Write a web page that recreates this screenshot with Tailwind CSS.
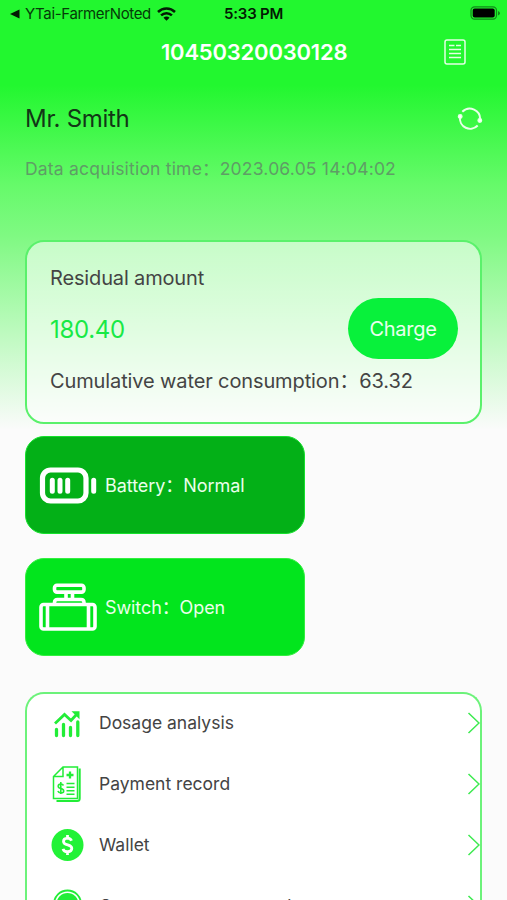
<!DOCTYPE html>
<html lang="en">
<head>
  <meta charset="UTF-8">
  <meta name="viewport" content="width=device-width, initial-scale=1.0">
  <title>Water Meter</title>
  <script src="https://cdn.jsdelivr.net/npm/@tailwindcss/browser@4"></script>
</head>
<body class="h-[900px] overflow-hidden bg-[#fbfbfb] bg-[linear-gradient(to_bottom,#22f72f_0px,#22f72f_85px,#67fa6b_187px,#80f983_237px,#fbfbfb_430px)] bg-no-repeat font-['Inter','Noto_Sans_CJK_SC',sans-serif] text-[#444]">
  <!-- status bar -->
  <div class="flex h-7 items-center justify-between pl-[9px] pr-1.5 text-[#053b08]">
    <div class="flex w-[215px] items-center">
      <svg class="h-3 w-[11px]" viewBox="0 0 11 12"><path d="M10.5 1.5v9L1 6z" fill="#031a04"/></svg>
      <span class="ml-[5px] text-[15px] tracking-[-0.35px]">YTai-FarmerNoted</span>
      <svg class="ml-1.5 h-[14px] w-[19px]" viewBox="0 0 19 14" fill="none" stroke="#031a04" stroke-width="2.5">
        <path d="M1 5a12.2 12.2 0 0 1 17 0"/>
        <path d="M4.1 8.4a7.7 7.7 0 0 1 10.8 0"/>
        <path d="M9.5 13.8l-3-3a4.2 4.2 0 0 1 6 0z" fill="#031a04" stroke="none"/>
      </svg>
    </div>
    <span class="text-[15px] font-semibold tracking-[-0.2px] text-[#031a04]">5:33 PM</span>
    <svg class="-mt-0.5 ml-auto h-[14px] w-[31px]" viewBox="0 0 31 14">
      <rect x="1" y="0.8" width="25.5" height="12.4" rx="3.6" fill="none" stroke="#118a1a" stroke-width="1.2"/>
      <rect x="2.7" y="2.4" width="22" height="9.2" rx="2" fill="#000"/>
      <path d="M28 5v4.6q2-.8 2-2.3t-2-2.3z" fill="#118a1a"/>
    </svg>
  </div>

  <!-- title bar -->
  <div class="flex h-12 items-center pl-[161px] pr-[41px] text-white">
    <h1 class="text-[22px] font-semibold tracking-[-0.2px]">10450320030128</h1>
    <svg class="ml-auto h-[26px] w-[22px]" viewBox="0 0 22 26" fill="none" stroke="#e4ffe5" stroke-width="1.5">
      <rect x="1" y="1" width="20" height="24" rx="2"/>
      <path d="M5 6.5h5.5M12 6.5h5M5 10.5h12M5 14.5h12M5 18.5h12"/>
    </svg>
  </div>

  <!-- user -->
  <div class="flex h-[85px] items-center pl-[25px] pr-[24px]">
    <h2 class="text-[24px] tracking-[-0.3px] text-[#123616]">Mr. Smith</h2>
    <svg class="ml-auto h-6 w-[26px]" viewBox="0 0 26 24" fill="none" stroke="#e9ffea" stroke-width="2">
      <path d="M5.3 4.8A10.3 10.3 0 0 1 23 13"/>
      <path d="M20.7 18.5A10.3 10.3 0 0 1 3 10"/>
      <circle cx="3.2" cy="9.5" r="1.8" fill="#fff" stroke-width="1.3"/>
      <circle cx="22.8" cy="13.5" r="1.8" fill="#fff" stroke-width="1.3"/>
    </svg>
  </div>
  <p class="-mt-0.5 flex h-[20px] items-center pl-[25px] text-[17.5px] tracking-[0.2px] whitespace-nowrap text-[#5f9d66]">Data acquisition time：2023.06.05 14:04:02</p>

  <!-- balance card -->
  <section class="mx-[25px] mt-[61px] h-[184px] rounded-[19px] border-2 border-[#5af16b] bg-white/55 pl-[23px] pr-[22px] pt-[20px]">
    <p class="h-8 text-[20px] leading-8 tracking-[-0.15px]">Residual amount</p>
    <div class="mt-[3px] flex h-[62px] items-center justify-between">
      <span class="mt-1 text-[24px] tracking-[-0.3px] text-[#18e946]">180.40</span>
      <button class="h-[61px] w-[110px] rounded-full bg-[#08f13b] pt-0.5 text-[20px] tracking-[-0.3px] text-[#eaffee]">Charge</button>
    </div>
    <p class="mt-[6px] h-8 text-[20px] leading-8 tracking-[-0.12px] whitespace-nowrap">Cumulative water consumption：63.32</p>
  </section>

  <!-- device state -->
  <section class="mx-[25px] mt-[12px] flex h-[98px] w-[280px] items-center rounded-[19px] border border-[#14e22c] bg-[#03b017] pl-[13px] text-[18px] text-[#eaffeb]">
    <svg class="h-[37px] w-[58px]" viewBox="0 0 58 37" fill="none" stroke="#fff">
      <rect x="3.5" y="3" width="43.5" height="31" rx="8" stroke-width="5.2"/>
      <path d="M13.3 13.3v11M21 13.3v11M28.7 13.3v11M54.7 13.3v11" stroke-width="5" stroke-linecap="round"/>
    </svg>
    <span class="ml-2 tracking-[-0.05px]">Battery：Normal</span>
  </section>
  <section class="mx-[25px] mt-[24px] flex h-[98px] w-[280px] items-center rounded-[19px] border border-[#33ef40] bg-[#02e51d] pl-[13px] text-[18px] text-[#eaffeb]">
    <svg class="h-[48px] w-[58px]" viewBox="0 0 58 48" fill="none" stroke="#fff" stroke-width="3.6" stroke-linejoin="round">
      <rect x="15.5" y="2.3" width="29.5" height="6.8" rx="2.5"/>
      <path d="M27 9v7M33.5 9v7M15.5 22v-2.5q0-3 3-3h23.5q3 0 3 3V22"/>
      <rect x="2" y="21.5" width="54" height="24.5" rx="2.5"/>
      <path d="M8.5 22v24M49.5 22v24"/>
    </svg>
    <span class="ml-2 tracking-[-0.1px]">Switch：Open</span>
  </section>

  <!-- menu -->
  <nav class="mx-[25px] mt-[36px] h-[208px] overflow-hidden rounded-t-[19px] border-2 border-b-0 border-[#6cf27a] bg-white text-[17.5px]">
    <a class="-mt-px flex h-[61px] items-center pl-[23px]">
      <svg class="h-[34px] w-[34px]" viewBox="0 0 34 34" fill="none" stroke="#22ed37" stroke-width="3.3">
        <path d="M6.5 22.5v6M13.5 17.5v11M20.5 20.5v8M27.8 15v13.5" stroke-linecap="round"/>
        <path d="M5 16.5l9.5-9 6.5 6 6-6.5" stroke-width="2.8"/>
        <path d="M21.5 4.3h8v8z" fill="#22ed37" stroke="none"/>
      </svg>
      <span class="ml-[15px]">Dosage analysis</span>
      <svg class="-mt-0.5 ml-auto h-6 w-[13px]" viewBox="0 0 13 24" fill="none" stroke="#3dea50" stroke-width="1.5"><path d="M1.5 2l10.5 10L1.5 22"/></svg>
    </a>
    <a class="flex h-[61px] items-center pl-[23px]">
      <svg class="-mt-0.5 h-[38px] w-[34px]" viewBox="0 0 34 38" fill="none" stroke="#22ed37" stroke-width="1.5">
        <path d="M13 2h14.500v31.500h-24V11.500zM13 2v9.500H3.500"/>
        <path d="M29.700 3.500v30q0 2.500-2.500 2.500H6.500" stroke-width="2"/>
        <path d="M20 6.500v7M16.500 10h7" stroke-width="2.300"/>
        <path d="M16.500 18.500h8M16.500 22.200h8M16.500 25.700h8M16.500 29.200h8"/>
        <path d="M13.500 20.500q-.8-1.500-2.800-1.500-2.500.1-2.500 2.200c0 3.200 5.500 1.500 5.500 4.700 0 2.600-5 2.700-5.800.1M10.800 17v12" stroke-width="1.600"/>
      </svg>
      <span class="ml-[15px]">Payment record</span>
      <svg class="-mt-0.5 ml-auto h-6 w-[13px]" viewBox="0 0 13 24" fill="none" stroke="#3dea50" stroke-width="1.5"><path d="M1.5 2l10.5 10L1.5 22"/></svg>
    </a>
    <a class="flex h-[61px] items-center pl-[23px]">
      <svg class="-mt-0.5 h-[34px] w-[34px]" viewBox="0 0 34 34" fill="none">
        <circle cx="17.5" cy="17" r="16" fill="#22f237"/>
        <path d="M21.5 12.8q-1-2.6-4-2.6-4 .2-4 3.2c0 4.7 8.3 2.3 8.3 6.9 0 4.5-7.6 4.5-8.800.5M17.5 7v3M17.5 24v3" stroke="#fff" stroke-width="2.8"/>
      </svg>
      <span class="ml-[15px]">Wallet</span>
      <svg class="-mt-0.5 ml-auto h-6 w-[13px]" viewBox="0 0 13 24" fill="none" stroke="#3dea50" stroke-width="1.5"><path d="M1.5 2l10.5 10L1.5 22"/></svg>
    </a>
    <a class="flex h-[61px] items-center pl-[23px]">
      <svg class="-mt-1.5 h-[34px] w-[34px]" viewBox="0 0 34 34" fill="none" stroke="#22ed37">
        <circle cx="17.5" cy="17" r="13.5" stroke-width="1.8"/>
        <circle cx="17.5" cy="17" r="11" fill="#22ed37" stroke="none"/>
      </svg>
      <span class="-mt-px ml-[15px] tracking-[0.2px]">Common usage record</span>
      <svg class="-mt-0.5 ml-auto h-6 w-[13px]" viewBox="0 0 13 24" fill="none" stroke="#3dea50" stroke-width="1.5"><path d="M1.5 2l10.5 10L1.5 22"/></svg>
    </a>
  </nav>
</body>
</html>
